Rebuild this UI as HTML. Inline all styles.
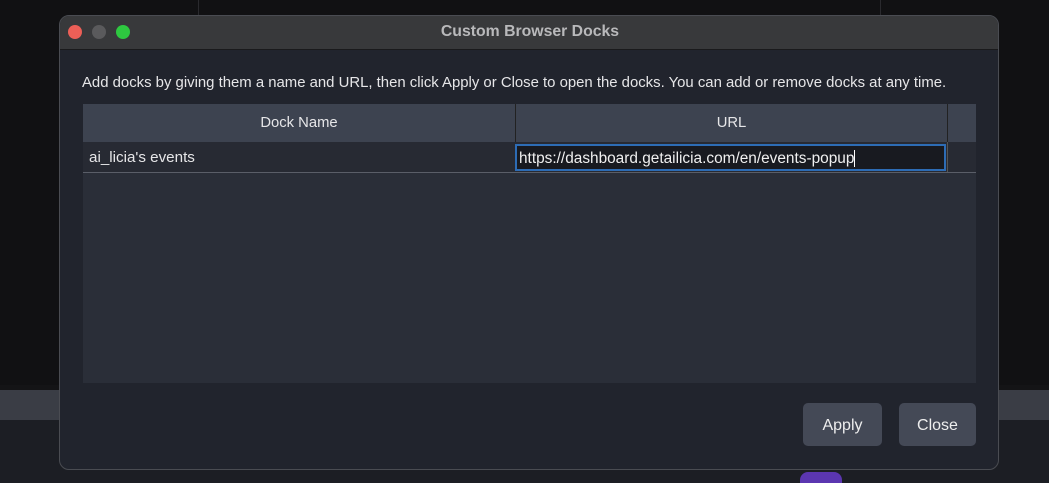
<!DOCTYPE html><html><head><style>
html,body{margin:0;width:1049px;height:483px;overflow:hidden}
body{background:#141416;position:relative;font-family:"Liberation Sans",sans-serif;}
.abs{position:absolute}
</style></head><body>
<div class="abs" style="left:0;top:0;width:1049px;height:385px;background:#111113"></div>
<div class="abs" style="left:198px;top:0;width:1px;height:15px;background:#2a2a2e"></div>
<div class="abs" style="left:880px;top:0;width:1px;height:15px;background:#2a2a2e"></div>
<div class="abs" style="left:0;top:390px;width:1049px;height:30px;background:#3a3d45"></div>
<div class="abs" style="left:0;top:420px;width:1049px;height:63px;background:#1c1e24"></div>
<div class="abs" style="left:800px;top:472px;width:42px;height:11px;border-radius:8px 8px 0 0;background:#5b36b0"></div>
<div class="abs" style="left:59px;top:15px;width:940px;height:455px;border-radius:10px;background:#21242d;border:1px solid #4a4c52;box-sizing:border-box;overflow:hidden">
 <div class="abs" style="left:0;top:0;width:940px;height:33px;background:#38393b;border-bottom:1px solid #1a1a1c"></div>
 <div class="abs" style="left:8px;top:9px;width:14px;height:14px;border-radius:50%;background:#ec5f57"></div>
 <div class="abs" style="left:32px;top:9px;width:14px;height:14px;border-radius:50%;background:#5a5a5c"></div>
 <div class="abs" style="left:56px;top:9px;width:14px;height:14px;border-radius:50%;background:#2ec840"></div>
 <div class="abs" style="left:0;top:7px;width:940px;text-align:center;color:#b9b9bb;font-weight:bold;font-size:15.8px">Custom Browser Docks</div>
 <div class="abs" style="left:22px;top:59px;color:#e6e6e8;font-size:14.9px;white-space:nowrap">Add docks by giving them a name and URL, then click Apply or Close to open the docks. You can add or remove docks at any time.</div>
 <div class="abs" style="left:23px;top:88px;width:893px;height:279px;background:#2a2e38">
  <div class="abs" style="left:0;top:0;width:432px;height:38px;background:#3d4350;border-right:1px solid #222;color:#e6e6e8;font-size:14.8px;line-height:38px;text-align:center">Dock Name</div>
  <div class="abs" style="left:433px;top:0;width:431px;height:38px;background:#3d4350;border-right:1px solid #222;color:#e6e6e8;font-size:14.8px;line-height:38px;text-align:center">URL</div>
  <div class="abs" style="left:865px;top:0;width:28px;height:38px;background:#3d4350"></div>
  <div class="abs" style="left:0;top:38px;width:893px;height:30px;border-bottom:1px solid #5a5e68;background:#272a33"></div>
  <div class="abs" style="left:6px;top:38px;line-height:32px;color:#e6e6e8;font-size:15.2px">ai_licia's events</div>
  <div class="abs" style="left:432px;top:40px;width:431px;height:27px;box-sizing:border-box;border:2px solid #2d6cb5;background:#181a20;color:#f0f0f0;font-size:15.4px;line-height:25px;padding-left:2px;white-space:nowrap">https://dashboard.getailicia.com/en/events-popup<span style="display:inline-block;width:1px;height:17px;background:#fff;vertical-align:middle"></span></div>
  <div class="abs" style="left:864px;top:38px;width:1px;height:30px;background:#555"></div>
 </div>
 <div class="abs" style="left:743px;top:387px;width:79px;height:43px;border-radius:5px;background:#444956;color:#eee;font-size:16px;line-height:45px;text-align:center">Apply</div>
 <div class="abs" style="left:839px;top:387px;width:77px;height:43px;border-radius:5px;background:#444956;color:#eee;font-size:16px;line-height:45px;text-align:center">Close</div>
</div>
</body></html>
